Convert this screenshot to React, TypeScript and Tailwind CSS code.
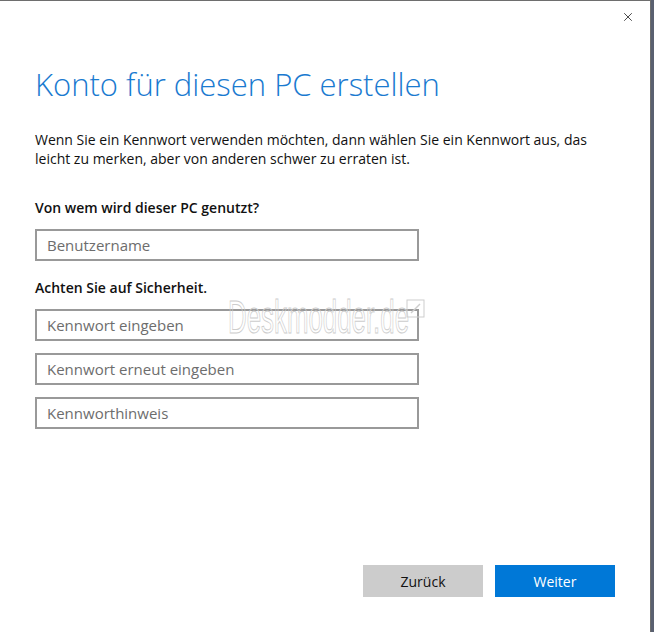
import { X } from "lucide-react";

const fields = ["Kennwort eingeben", "Kennwort erneut eingeben", "Kennworthinweis"];

function Field({ placeholder }: { placeholder: string }) {
  return (
    <input
      placeholder={placeholder}
      className="h-[32px] w-[384px] border-2 border-[#999999] bg-white px-[10px] text-[15px] text-[#222] placeholder:text-[#6d6d6d] focus:outline-none"
    />
  );
}

export default function App() {
  return (
    <div className="flex h-[632px] w-[654px] bg-[#5a6070] font-['Open_Sans',sans-serif]">
      <div className="relative flex h-full w-[651px] flex-col border-t border-r border-[#6e6e6e] bg-white">
        <div className="flex justify-end pt-[9px] pr-[15px]">
          <X className="h-[14px] w-[14px] text-[#111]" strokeWidth={1.3} />
        </div>

        <div className="px-[35px]">
          <h1 className="mt-[40px] text-[31px] leading-[40px] font-light text-[#1a7ad0]">
            Konto für diesen PC erstellen
          </h1>
          <p className="mt-[26px] text-[14px] leading-[19px] text-[#111]">
            Wenn Sie ein Kennwort verwenden möchten, dann wählen Sie ein Kennwort aus, das
            leicht zu merken, aber von anderen schwer zu erraten ist.
          </p>

          <h2 className="mt-[30px] text-[14px] leading-[19px] font-semibold text-[#111]">
            Von wem wird dieser PC genutzt?
          </h2>
          <div className="mt-[12px]">
            <Field placeholder="Benutzername" />
          </div>

          <h2 className="mt-[17px] text-[14px] leading-[19px] font-semibold text-[#111]">
            Achten Sie auf Sicherheit.
          </h2>
          <div className="mt-[12px] flex flex-col gap-[12px]">
            {fields.map((f) => (
              <Field key={f} placeholder={f} />
            ))}
          </div>
        </div>

        <div className="mt-auto mb-[35px] flex justify-end gap-[12px] pr-[35px]">
          <button className="h-[32px] w-[120px] bg-[#cccccc] text-[14px] text-[#111]">Zurück</button>
          <button className="h-[32px] w-[120px] bg-[#0078d7] text-[14px] text-white">Weiter</button>
        </div>

        {/* watermark */}
        <span className="pointer-events-none absolute top-[290px] left-[228px] origin-left scale-x-[0.55] font-['Liberation_Sans',sans-serif] text-[47px] leading-[52px] text-transparent [-webkit-text-stroke:1px_#cdcdcd]">
          Deskmodder.de
        </span>
        <svg width="19" height="19" viewBox="0 0 19 19" className="pointer-events-none absolute top-[298px] left-[406px]">
          <rect x="1" y="1" width="17" height="17" fill="none" stroke="#cdcdcd" />
          <path d="M5 14 L14 5" stroke="#cdcdcd" strokeWidth="1.5" />
        </svg>
      </div>
    </div>
  );
}
